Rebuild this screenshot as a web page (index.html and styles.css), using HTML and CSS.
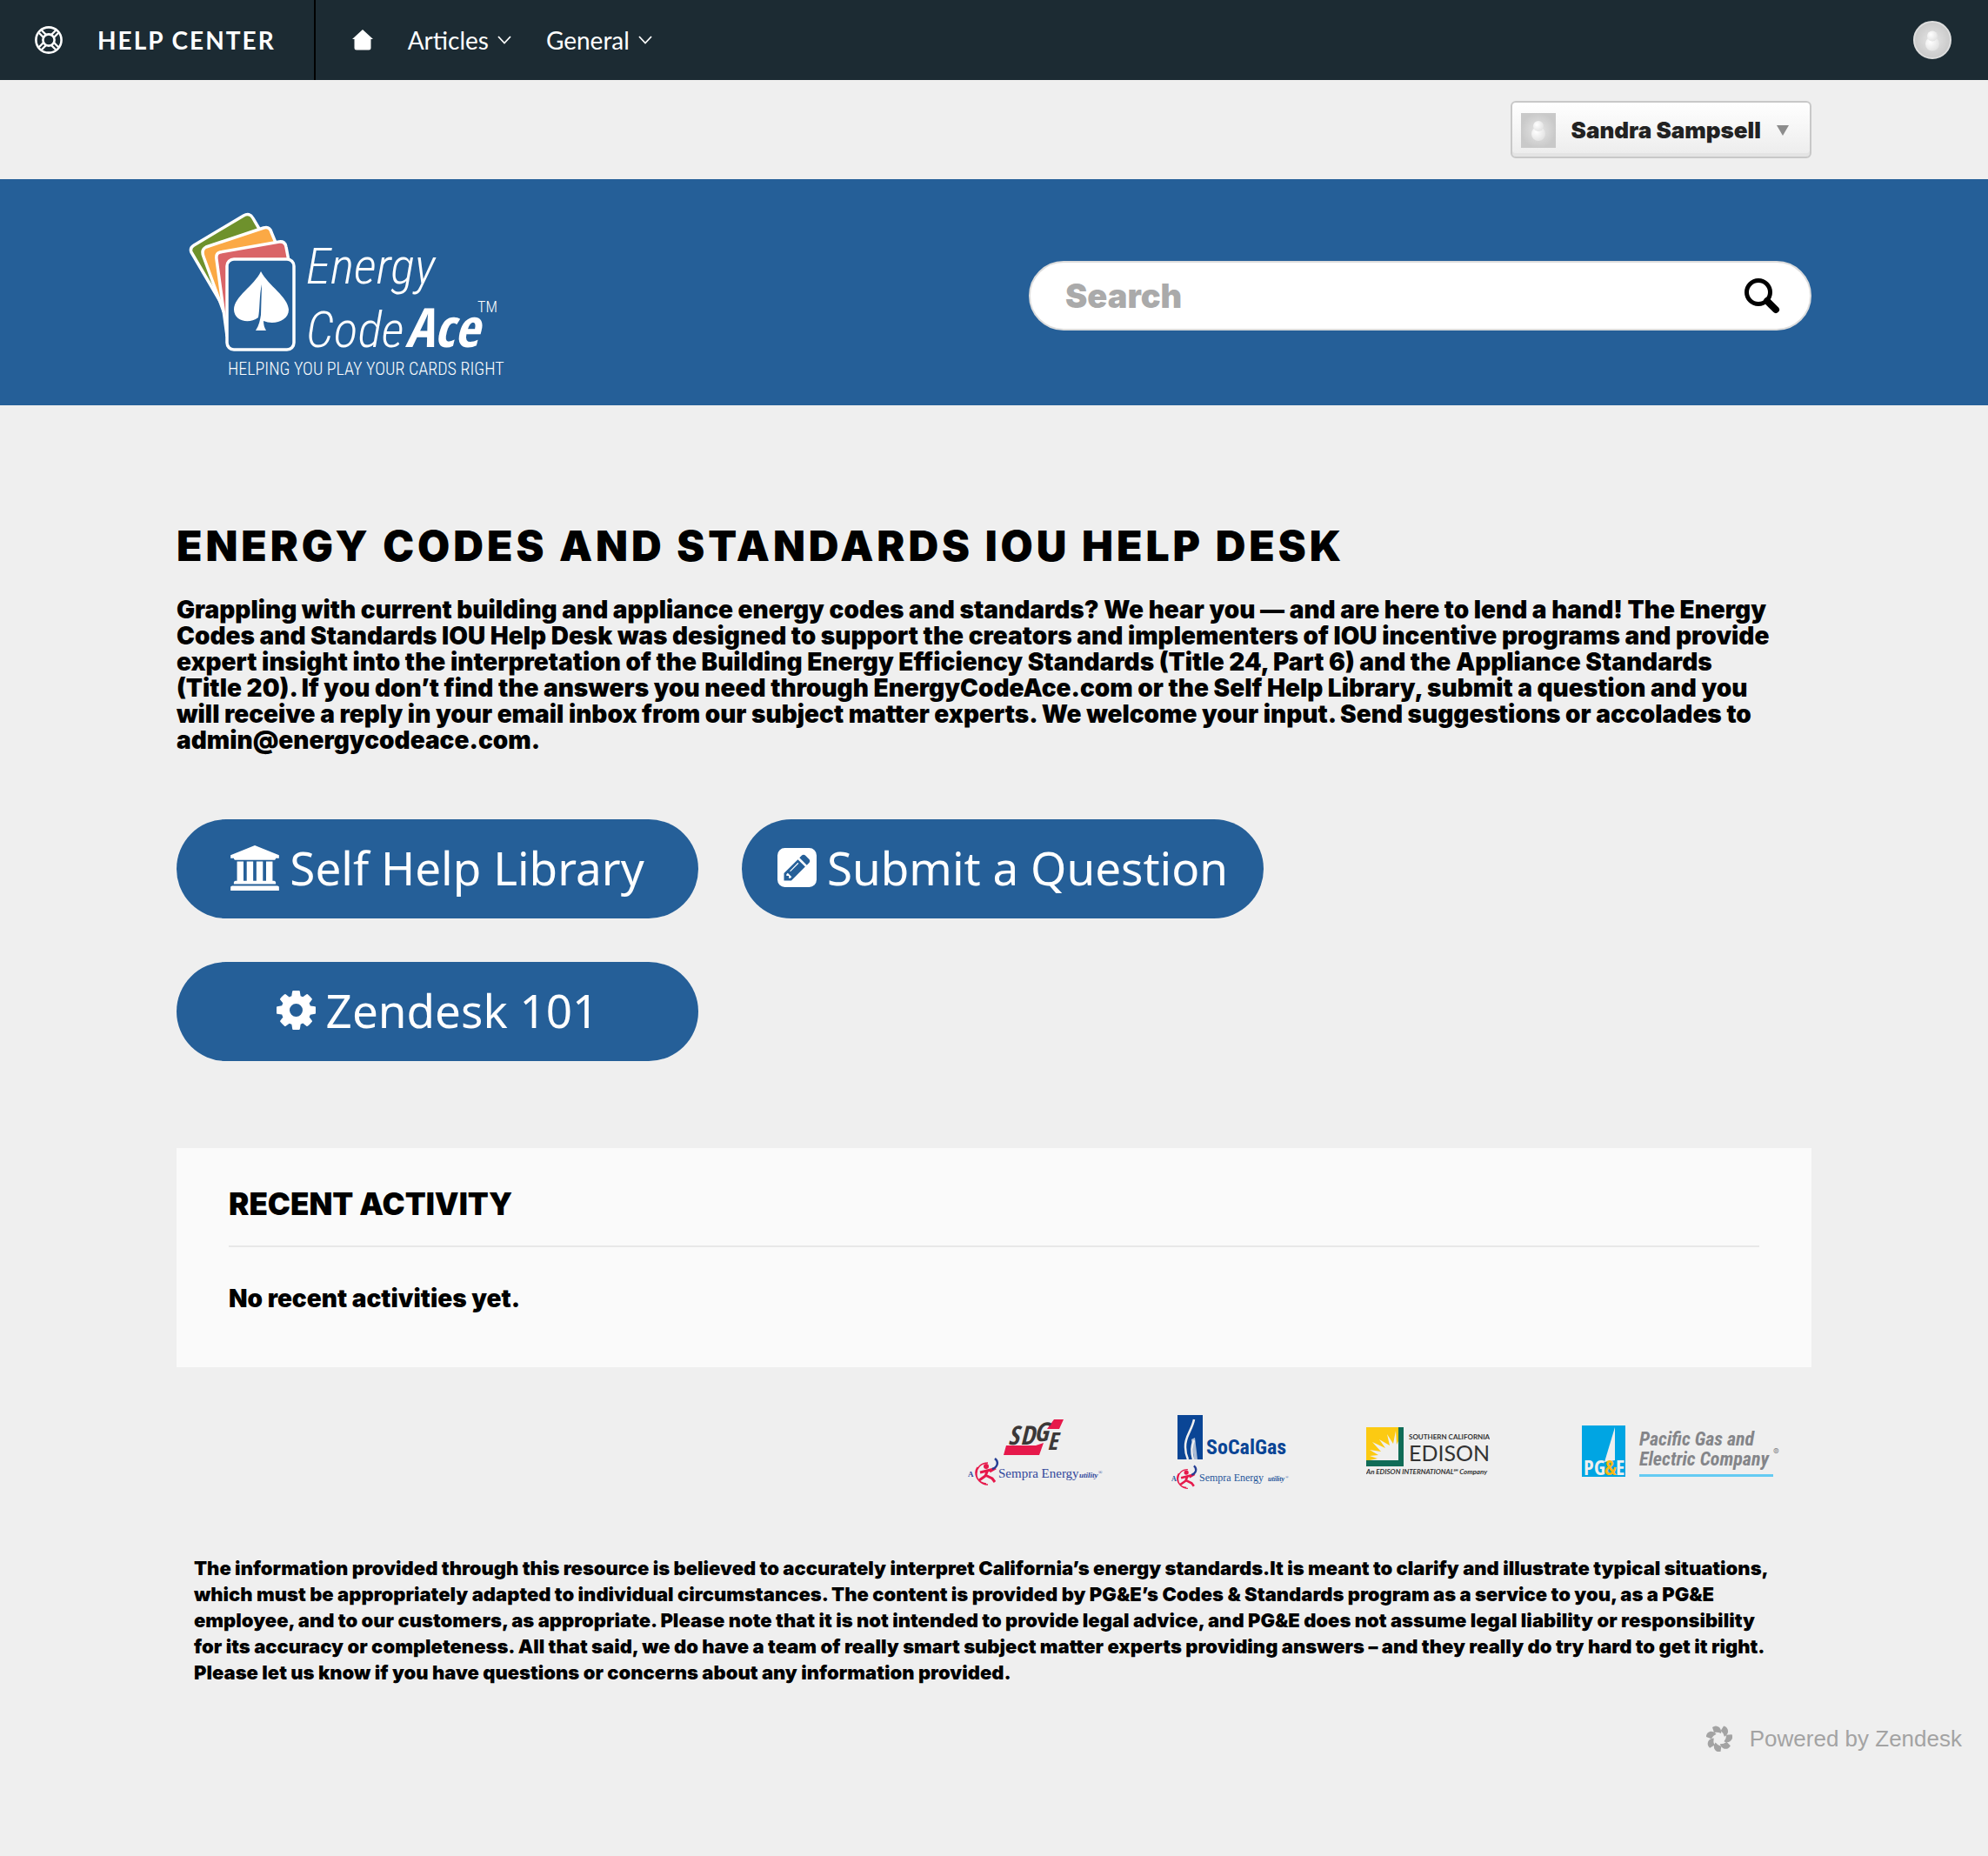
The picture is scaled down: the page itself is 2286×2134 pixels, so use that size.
FILE: index.html
```html
<!DOCTYPE html>
<html lang="en">
<head>
<meta charset="utf-8">
<meta name="viewport" content="width=device-width, initial-scale=1">
<title>Energy Codes and Standards IOU Help Desk</title>
<link rel="stylesheet" href="styles.css">
</head>
<body>
<nav class="topbar">
  <a class="brand" href="#">
    <svg class="brand-icon" viewBox="0 0 32 32" aria-hidden="true"><g fill="none" stroke="#fff" stroke-width="2.6"><circle cx="16" cy="16" r="14.6"/><circle cx="16" cy="16" r="6.6"/></g><g stroke="#fff" stroke-width="2.4"><path d="M5 8l5.500 5.500M8 5l5.500 5.500M27 8l-5.500 5.500M24 5l-5.500 5.500M5 24l5.500-5.500M8 27l5.500-5.500M27 24l-5.500-5.500M24 27l-5.500-5.500"/></g></svg>
    <span>HELP CENTER</span>
  </a>
  <div class="menu">
    <a href="#" aria-label="Home"><svg class="home-icon" viewBox="0 0 24 24" aria-hidden="true"><path d="M12 0L24 11H21.500V21a2.500 2.500 0 0 1-2.500 2.500H5A2.500 2.500 0 0 1 2.500 21V11H0z" fill="#fff"/></svg></a>
    <a class="menu-item" href="#">Articles <svg class="chevron" viewBox="0 0 16 10" aria-hidden="true"><path d="M1 1l7 7.500L15 1" fill="none" stroke="#fff" stroke-width="1.800"/></svg></a>
    <a class="menu-item" href="#">General <svg class="chevron" viewBox="0 0 16 10" aria-hidden="true"><path d="M1 1l7 7.500L15 1" fill="none" stroke="#fff" stroke-width="1.800"/></svg></a>
  </div>
  <a class="profile" href="#" aria-label="Profile">
    <svg viewBox="0 0 44 44" aria-hidden="true"><defs><radialGradient id="face"><stop offset="0" stop-color="#e6e6e6"/><stop offset="1" stop-color="#c9c9c9"/></radialGradient><radialGradient id="body" cx=".35" cy=".35" r=".8"><stop offset="0" stop-color="#fff"/><stop offset="1" stop-color="#dedede"/></radialGradient></defs><circle cx="22" cy="22" r="21" fill="url(#face)" stroke="#dedede" stroke-width="2"/><circle cx="22" cy="26.500" r="8" fill="url(#body)"/><circle cx="22" cy="17.500" r="6" fill="url(#body)"/></svg>
  </a>
</nav>

<div class="account wrap">
  <button class="user" type="button">
    <svg class="user-photo" viewBox="0 0 40 40" aria-hidden="true"><path fill="url(#face)" d="M0 0h40v40H0z"/><circle cx="20" cy="24" r="8" fill="url(#body)"/><circle cx="20" cy="15" r="6" fill="url(#body)"/></svg>
    <span>Sandra Sampsell</span>
    <svg class="caret" viewBox="0 0 14 12" aria-hidden="true"><path d="M0 0h14L7 12z" fill="#8c8c8c"/></svg>
  </button>
</div>

<header class="banner">
  <div class="banner-inner wrap">
    <a class="logo" href="#" aria-label="Energy Code Ace">
      <svg viewBox="3 0 400 220">
        <g stroke="#fff" stroke-width="3.500" stroke-linejoin="round">
          <path fill="#6e912c" d="M23 52L80 18q7-4 11 3l7 12V100H70V130L54 118 20 60q-2-5 3-8z"/>
          <path fill="#fba945" d="M37 54L103 32q7-2 9 5l5 12V100H70V140L57 128 34 65q-3-8 3-11z"/>
          <path fill="#da6467" d="M53 60L121 48q7-1 8 6l3 16V100H70V160L61 156 49 68q-1-7 4-8z"/>
          <rect x="61" y="68" width="77" height="104" rx="8" fill="#255f98"/>
        </g>
        <path fill="#fff" d="M100 82c9 17 31 29 32 44 0 13-17 18-29 13 0 4 1 8 3 11H94c4-6 5-12 6-18l1-35c-3 12-2 29-4 38-12 9-28 3-28-9 0-15 23-27 31-44z"/>
        <g fill="#fff">
          <text class="logo-name" x="152" y="96">Energy</text>
          <text class="logo-name" x="152" y="169">Code</text>
          <text class="logo-ace" x="266" y="169">Ace</text>
          <text class="logo-tm" x="349" y="129">TM</text>
          <text class="logo-tag" x="62" y="201">HELPING YOU PLAY YOUR CARDS RIGHT</text>
        </g>
      </svg>
    </a>
    <form class="search" role="search">
      <input type="search" placeholder="Search" aria-label="Search">
      <button type="submit" aria-label="Submit search"><svg viewBox="0 0 42 42" aria-hidden="true"><circle cx="17" cy="17" r="13.500" fill="none" stroke="#000" stroke-width="5"/><path d="M27 27l10 10" stroke="#000" stroke-width="8" stroke-linecap="round"/></svg></button>
    </form>
  </div>
</header>

<main class="wrap">
  <h1>ENERGY CODES AND STANDARDS IOU HELP DESK</h1>
  <p class="intro">Grappling with current building and appliance energy codes and standards? We hear you — and are here to lend a hand! The Energy Codes and Standards IOU Help Desk was designed to support the creators and implementers of IOU incentive programs and provide expert insight into the interpretation of the Building Energy Efficiency Standards (Title 24, Part 6) and the Appliance Standards (Title&nbsp;20). If you don’t find the answers you need through EnergyCodeAce.com or the Self Help Library, submit a question and you will&nbsp;receive a reply in your email inbox from our subject matter experts. We welcome your input. Send suggestions or accolades to admin@energycodeace.com.</p>

  <div class="actions">
    <a class="action" href="#"><svg class="icon-library" viewBox="0 0 1920 1792" aria-hidden="true"><path fill="#fff" d="M960 0l960 384v128h-128q0 26-20.500 45t-48.500 19h-1526q-28 0-48.500-19t-20.500-45h-128v-128zm-704 640h256v768h128v-768h256v768h128v-768h256v768h128v-768h256v768h59q28 0 48.500 19t20.500 45v64h-1664v-64q0-26 20.500-45t48.500-19h59v-768zm1595 960q28 0 48.500 19t20.500 45v128h-1920v-128q0-26 20.500-45t48.500-19h1782z"/></svg><span>Self Help Library</span></a>
    <a class="action" href="#"><svg class="icon" viewBox="0 128 1536 1536" aria-hidden="true"><path fill="#fff" fill-rule="evenodd" d="M404 1108l152 152-52 52h-56v-96h-96v-56zm414-390q14 13-3 30l-291 291q-17 17-30 3-14-13 3-30l291-291q17-17 30-3zm-274 690l544-544-288-288-544 544v288h288zm608-608l92-92q28-28 28-68t-28-68l-152-152q-28-28-68-28t-68 28l-92 92zm384-384v960q0 119-84.500 203.500t-203.500 84.500h-960q-119 0-203.500-84.500t-84.500-203.500v-960q0-119 84.500-203.500t203.500-84.500h960q119 0 203.500 84.500t84.500 203.500z"/></svg><span>Submit a Question</span></a>
    <a class="action" href="#"><svg class="icon" viewBox="128 128 1536 1536" aria-hidden="true"><path fill="#fff" d="M1152 896q0-106-75-181t-181-75-181 75-75 181 75 181 181 75 181-75 75-181zm512-109v222q0 12-8 23t-20 13l-185 28q-19 54-39 91 35 50 107 138 10 12 10 25t-9 23q-27 37-99 108t-94 71q-12 0-26-9l-138-108q-44 23-91 38-16 136-29 186-7 28-36 28h-222q-14 0-24.500-8.500t-11.500-21.500l-28-184q-49-16-90-37l-141 107q-10 9-25 9-14 0-25-11-126-114-165-168-7-10-7-23 0-12 8-23 15-21 51-66.500t54-70.500q-27-50-41-99l-183-27q-13-2-21-12.500t-8-23.500v-222q0-12 8-23t19-13l186-28q14-46 39-92-40-57-107-138-10-12-10-24 0-10 9-23 26-36 98.500-107.500t94.500-71.500q13 0 26 10l138 107q44-23 91-38 16-136 29-186 7-28 36-28h222q14 0 24.500 8.500t11.500 21.500l28 184q49 16 90 37l142-107q9-9 24-9 13 0 25 10 129 119 165 170 7 8 7 22 0 12-8 23-15 21-51 66.500t-54 70.500q26 50 41 98l183 28q13 2 21 12.500t8 23.500z"/></svg><span>Zendesk 101</span></a>
  </div>

  <section class="activity">
    <h2>RECENT ACTIVITY</h2>
    <p>No recent activities yet.</p>
  </section>
</main>

<footer>
  <div class="wrap footer-inner">
    <div class="partners">
      <svg class="sdge" viewBox="24 20 156 78" role="img" aria-label="SDGE, a Sempra Energy utility">
        <path fill="#e6194b" d="M68 52h34l9-3-5 14H65zM123 22h11l-5 11h-14z"/>
        <g class="plate" fill="#3b3837" font-size="30"><text x="70" y="51">S</text><text x="84" y="51">D</text><text x="100" y="47">G</text><text x="115" y="57" font-size="28">E</text></g>
        <g id="mark"><g fill="none" stroke="#e6194b"><path stroke-width="1.500" d="M47 72c-17 0-18 24 0 25M35 77c-5 8 0 18 10 19"/><path stroke-width="3" d="M38 83l16-4M47 80l-3 7-7 5M44 86l8 4 3 4M56 78l-7 4"/></g><circle cx="45" cy="76" r="3" fill="#e6194b"/><path d="M55 67c5 4 3 10-3 12" fill="none" stroke="#263f94" stroke-width="2.500"/></g>
        <g class="sempra" fill="#31479b"><text x="24" y="88" font-size="9" font-weight="700">A</text><text x="59" y="89" font-size="15">Sempra Energy</text><text x="152" y="89" font-size="9" font-weight="700" font-style="italic">utility</text><text x="174" y="85" font-size="6">®</text></g>
      </svg>
      <svg class="socal" viewBox="258 18 137 86" role="img" aria-label="SoCalGas, a Sempra Energy utility">
        <path fill="#0a4595" d="M265 19h29v51h-29z"/><path fill="none" stroke="#efefef" stroke-width="2.500" d="M284 24c-2 12-11 20-10 32q0 7 3 14M284 48c-3 6-3 15-1 22"/><path fill="#efefef" d="M281 47l4-2 3 25h-4z" opacity=".7"/>
        <text class="socal-name" x="298" y="64">SoCalGas</text>
        <use href="#mark" transform="translate(236 19) scale(.87)"/>
        <g class="sempra" fill="#1f569b"><text x="258" y="95" font-size="8" font-weight="700">A</text><text x="290" y="95" font-size="12">Sempra Energy</text><text x="369" y="95" font-size="8" font-weight="700" font-style="italic">utility</text><text x="389" y="92" font-size="5">®</text></g>
      </svg>
      <svg class="edison" viewBox="0 0 142 56" role="img" aria-label="Southern California Edison">
        <path fill="#106c57" d="M0 0h43v45H0z"/><path fill="#fcca12" d="M0 0h37v38H0z"/>
        <path fill="#efefef" d="M37 38V16l-2 4-1-16-3 15-7-11 3 13-12-7 7 10-15-7 10 11-13-2 10 6-10 1 9 3-9 2z"/>
        <g class="edison-text"><text x="49" y="14" font-size="8" font-weight="700">SOUTHERN CALIFORNIA</text><text x="49" y="39" font-size="25">EDISON</text><text x="0" y="54" font-size="8" font-weight="700" font-style="italic">An EDISON INTERNATIONAL℠ Company</text></g>
      </svg>
      <svg class="pge" viewBox="0 0 230 60" role="img" aria-label="PG&amp;E Pacific Gas and Electric Company">
        <path fill="#00a5e3" d="M0 0h50v59H0z"/><path fill="#efefef" d="M38 2v38l-12 2z"/>
        <g class="plate upright" font-size="24"><text x="2" y="57" fill="#efefef">P</text><text x="14" y="57" fill="#efefef">G</text><text x="26" y="57" fill="#fdb813">&amp;</text><text x="39" y="57" fill="#efefef">E</text></g>
        <g class="pge-name"><text x="66" y="23">Pacific Gas and</text><text x="66" y="46">Electric Company</text></g><text class="pge-reg" x="220" y="34">®</text>
        <path fill="#64cbf3" d="M66 56h154v3H66z"/>
      </svg>
    </div>
    <p class="disclaimer">The information provided through this resource is believed to accurately interpret California’s energy standards.It is meant to clarify and illustrate typical situations, which must be appropriately adapted to individual circumstances. The content is provided by PG&amp;E’s Codes &amp; Standards program as a service to you, as a PG&amp;E employee, and to our customers, as appropriate. Please note that it is not intended to provide legal advice, and PG&amp;E does not assume legal liability or responsibility for&nbsp;its accuracy or completeness. All that said, we do have a team of really smart subject matter experts providing answers – and they really do try hard to get it right. Please let us know if you have questions or concerns about any information provided.</p>
  </div>
  <a class="powered" href="#">
    <svg viewBox="-15 -15 30 30" aria-hidden="true"><defs><path id="petal" d="M-6-7l-2-6q4-3 8 0 3 3 2 7-4-2-8-1z"/></defs><g fill="#a3a3a3"><use href="#petal"/><use href="#petal" transform="rotate(51)"/><use href="#petal" transform="rotate(103)"/><use href="#petal" transform="rotate(154)"/><use href="#petal" transform="rotate(206)"/><use href="#petal" transform="rotate(257)"/><use href="#petal" transform="rotate(309)"/></g></svg>
    <span>Powered by Zendesk</span>
  </a>
</footer>
</body>
</html>
```
FILE: styles.css
```css
* { box-sizing: border-box; }

body {
  margin: 0;
  background: #efefef;
  color: #000;
  font-family: Inter, "Liberation Sans", sans-serif;
  font-weight: 900;
  font-size: 28px;
  line-height: 30px;
}

a { color: inherit; text-decoration: none; }
button, input { font: inherit; }
svg { display: block; flex: none; }
h1, h2, p { margin: 0; }

.wrap { max-width: 1880px; margin: 0 auto; }

/* Top navigation */
.topbar {
  display: flex;
  align-items: center;
  height: 92px;
  padding-right: 42px;
  background: #1c2b33;
  color: #fff;
  font-family: Lato, sans-serif;
  font-weight: 400;
  font-size: 28px;
}
.brand {
  display: flex;
  align-items: center;
  align-self: stretch;
  gap: 40px;
  padding: 0 44px 0 40px;
  border-right: 2px solid #000;
  font-weight: 700;
  letter-spacing: 2px;
}
.brand-icon { width: 32px; height: 32px; }
.menu { display: flex; align-items: center; gap: 40px; padding-left: 42px; }
.home-icon { width: 24px; height: 24px; }
.menu-item { display: flex; align-items: center; gap: 10px; }
.chevron { width: 16px; height: 10px; }
.profile { margin-left: auto; }
.profile svg { width: 44px; height: 44px; }

/* Account strip */
.account { display: flex; justify-content: flex-end; padding: 24px 0; }
.user {
  display: flex;
  align-items: center;
  height: 66px;
  padding: 2px 24px 0 10px;
  border: 2px solid #c8c8c8;
  border-radius: 6px;
  background: linear-gradient(#fff, #ececec);
  box-shadow: inset 0 -4px 0 #e4e4e4;
  color: #222;
  font-size: 26px;
}
.user-photo { width: 40px; height: 40px; margin-right: 18px; }
.caret { width: 14px; height: 12px; margin-left: 18px; }

/* Banner */
.banner { background: #255f98; }
.banner-inner { display: flex; align-items: center; justify-content: space-between; padding: 24px 0 16px; }
.logo svg { width: 400px; height: 220px; }
.logo-name, .logo-tm, .logo-tag { font-family: "Roboto Condensed", Roboto, sans-serif; font-weight: 300; }
.logo-name { font-size: 58px; font-style: italic; }
.logo-ace { font-family: "Open Sans Condensed", "Roboto Condensed", sans-serif; font-size: 62px; font-style: italic; font-weight: 700; }
.logo-tm { font-size: 18px; }
.logo-tag { font-size: 20px; }
.search {
  display: flex;
  align-items: center;
  width: 900px;
  height: 80px;
  padding: 0 34px 0 40px;
  border: 2px solid #ddd;
  border-radius: 40px;
  background: #fff;
}
.search input { flex: 1; min-width: 0; padding: 0; border: 0; outline: 0; background: none; font-size: 38px; line-height: 44px; }
.search input::placeholder { color: #aaa; opacity: 1; }
.search button { padding: 0; border: 0; background: none; }
.search svg { width: 42px; height: 42px; }

/* Main column */
h1 { padding-top: 132px; font-size: 48px; line-height: 60px; font-weight: 900; letter-spacing: 4px; }
.intro { padding-top: 28px; }
.actions { display: flex; flex-wrap: wrap; gap: 50px; max-width: 1300px; padding-top: 76px; }
.action {
  display: flex;
  align-items: center;
  justify-content: center;
  gap: 12px;
  width: 600px;
  height: 114px;
  padding-bottom: 3px;
  border-radius: 57px;
  background: #255f98;
  color: #fff;
  font-family: "Noto Sans", sans-serif;
  font-weight: 400;
  font-size: 53px;
  line-height: 60px;
}
.icon-library { width: 56px; height: 52px; }
.icon { width: 45px; height: 45px; }
.activity { margin-top: 100px; padding: 40px 60px 64px; background: #fafafa; }
.activity h2 { padding: 4px 0 28px; border-bottom: 2px solid #e8e8e8; font-size: 35px; line-height: 40px; font-weight: 900; }
.activity p { padding-top: 44px; }

/* Footer */
.footer-inner { padding: 54px 20px 0; }
.partners { display: flex; align-items: center; justify-content: flex-end; padding-right: 14px; }
.sdge { width: 156px; height: 78px; margin-right: 78px; }
.socal { width: 137px; height: 86px; margin-right: 87px; }
.edison { width: 142px; height: 56px; margin-right: 106px; }
.pge { width: 230px; height: 60px; }
.plate { font-family: "Open Sans Condensed", "Roboto Condensed", sans-serif; font-weight: 700; font-style: italic; }
.upright { font-style: normal; }
.sempra { font-family: "Liberation Serif", serif; font-weight: 400; }
.socal-name { font-family: "Roboto Condensed", Roboto, sans-serif; font-size: 24px; font-weight: 700; fill: #0a4595; }
.edison-text { font-family: Lato, sans-serif; font-weight: 400; fill: #333; }
.pge-name { font-family: "Roboto Condensed", Roboto, sans-serif; font-size: 22px; font-style: italic; font-weight: 700; fill: #848589; }
.pge-reg { font-size: 10px; font-weight: 400; fill: #848589; }
.disclaimer { padding-top: 76px; font-size: 22px; }
.powered {
  display: flex;
  align-items: center;
  justify-content: flex-end;
  gap: 20px;
  padding: 46px 30px 120px;
  color: #a3a3a3;
  font-family: "Liberation Sans", sans-serif;
  font-weight: 400;
  font-size: 26px;
}
.powered svg { width: 30px; height: 30px; }
```
